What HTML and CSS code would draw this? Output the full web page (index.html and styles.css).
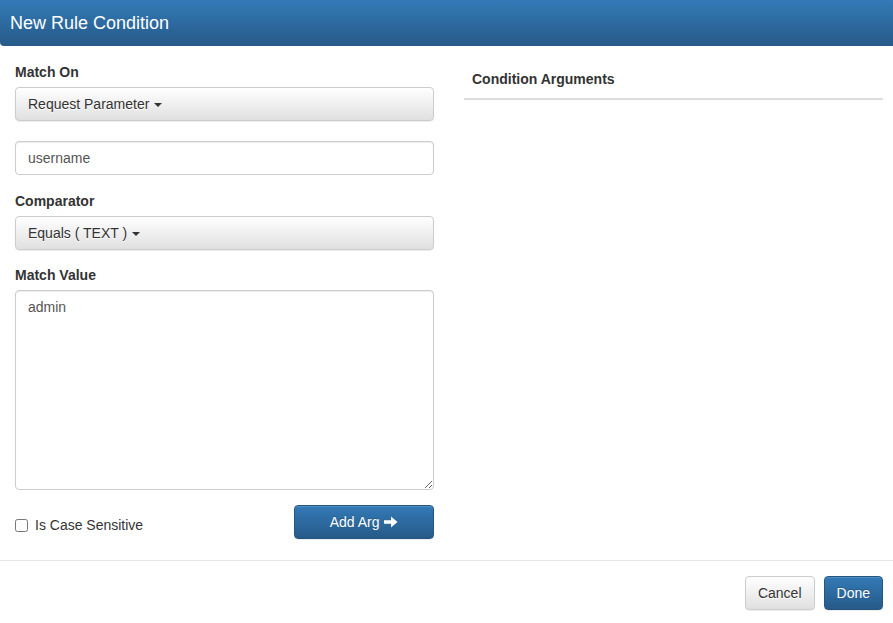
FILE: index.html
```html
<!DOCTYPE html>
<html>
<head>
<meta charset="utf-8">
<link rel="stylesheet" href="styles.css">
</head>
<body>
<div class="modal">
  <div class="modal-header">
    <h4 class="modal-title">New Rule Condition</h4>
  </div>
  <div class="modal-body">
    <div class="col-left">
      <div class="form-group">
        <label class="control-label">Match On</label>
        <button class="btn btn-default btn-block-left">Request Parameter <span class="caret"></span></button>
      </div>
      <div class="form-group gap-top">
        <input class="form-control" type="text" value="username">
      </div>
      <div class="form-group">
        <label class="control-label">Comparator</label>
        <button class="btn btn-default btn-block-left">Equals ( TEXT ) <span class="caret"></span></button>
      </div>
      <div class="form-group">
        <label class="control-label">Match Value</label>
        <textarea class="form-control textarea">admin</textarea>
      </div>
      <div class="bottom-row">
        <label class="checkbox-label"><input type="checkbox" class="checkbox"> Is Case Sensitive</label>
        <button class="btn btn-primary btn-add">Add Arg <svg class="arrow" width="14" height="12" viewBox="0 0 14 12"><path d="M0 4.2h7V0.5l6.5 5.5L7 11.5V7.8H0z" fill="#fff"/></svg></button>
      </div>
    </div>
    <div class="col-right">
      <table class="table">
        <thead><tr><th>Condition Arguments</th></tr></thead>
      </table>
    </div>
  </div>
  <div class="modal-footer">
    <button class="btn btn-default">Cancel</button>
    <button class="btn btn-primary">Done</button>
  </div>
</div>
</body>
</html>
```
FILE: styles.css
```css
* { box-sizing: border-box; }
html, body { margin: 0; padding: 0; background: #fff; }
body {
  font-family: "Liberation Sans", Arial, Helvetica, sans-serif;
  font-size: 14px;
  line-height: 20px;
  color: #333;
}
.modal { width: 893px; height: 623px; overflow: hidden; background: #fff; }
.modal-header {
  height: 46px;
  padding: 12px 10px;
  background: linear-gradient(to bottom, #337ab7 0%, #265a88 100%);
  border-bottom-left-radius: 4px;
}
.modal-title {
  margin: 0;
  color: #fff;
  font-size: 18px;
  font-weight: normal;
  line-height: 22px;
}
.modal-body {
  display: grid;
  grid-template-columns: 419px 419px;
  column-gap: 30px;
  padding: 16px 10px 14px 15px;
  height: 514px;
}
.form-group { margin-bottom: 15px; }
.gap-top { margin-top: 20px; margin-bottom: 16px; }
.control-label {
  display: block;
  font-weight: bold;
  margin-bottom: 5px;
}
.btn {
  display: inline-block;
  font-family: inherit;
  font-size: 14px;
  line-height: 20px;
  padding: 6px 12px;
  border: 1px solid transparent;
  border-radius: 4px;
  cursor: pointer;
  white-space: nowrap;
}
.btn-default {
  color: #333;
  background: linear-gradient(to bottom, #fff 0%, #e0e0e0 100%);
  border-color: #ccc;
  text-shadow: 0 1px 0 #fff;
  box-shadow: inset 0 1px 0 rgba(255,255,255,.15), 0 1px 1px rgba(0,0,0,.075);
}
.btn-primary {
  color: #fff;
  background: linear-gradient(to bottom, #337ab7 0%, #265a88 100%);
  border-color: #245580;
  text-shadow: 0 -1px 0 rgba(0,0,0,.2);
  box-shadow: inset 0 1px 0 rgba(255,255,255,.15), 0 1px 1px rgba(0,0,0,.075);
}
.btn-block-left { display: block; width: 100%; text-align: left; height: 34px; }
.caret {
  display: inline-block;
  width: 0; height: 0;
  margin-left: 1px;
  vertical-align: middle;
  border-top: 4px solid #333;
  border-left: 4px solid transparent;
  border-right: 4px solid transparent;
}
.form-control {
  display: block;
  width: 100%;
  height: 34px;
  padding: 6px 12px;
  font-family: inherit;
  font-size: 14px;
  line-height: 20px;
  color: #555;
  background: #fff;
  border: 1px solid #ccc;
  border-radius: 4px;
  box-shadow: inset 0 1px 1px rgba(0,0,0,.075);
}
.textarea { height: 200px; resize: vertical; }
.bottom-row {
  display: flex;
  align-items: center;
  justify-content: space-between;
}
.checkbox-label { display: flex; align-items: center; font-weight: normal; padding-top: 6px; }
.checkbox { width: 13px; height: 13px; margin: 0 7px 0 0; }
.btn-add { width: 140px; height: 34px; text-align: center; }
.arrow { vertical-align: -1px; margin-left: 1px; }
.table { width: 100%; border-collapse: collapse; }
.table th {
  text-align: left;
  padding: 7px 8px 9px;
  border-bottom: 2px solid #ddd;
  font-weight: bold;
  line-height: 20px;
}
.modal-footer {
  border-top: 1px solid #e5e5e5;
  padding: 15px 10px 15px 15px;
  display: flex;
  justify-content: flex-end;
  gap: 9px;
}
.modal-footer .btn { height: 34px; }
```
